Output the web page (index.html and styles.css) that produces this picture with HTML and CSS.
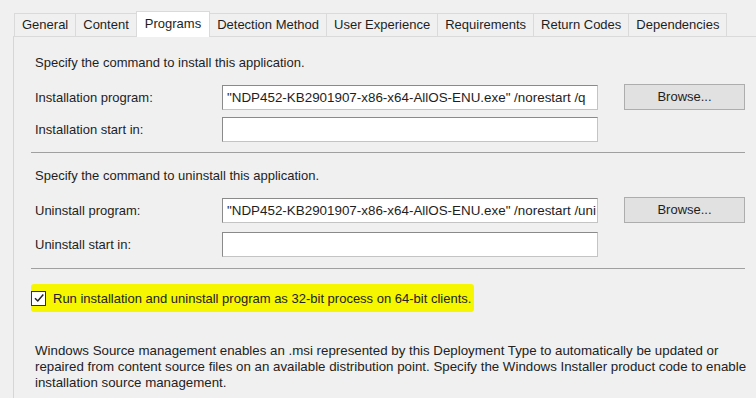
FILE: index.html
```html
<!DOCTYPE html>
<html>
<head>
<meta charset="utf-8">
<link rel="stylesheet" href="styles.css">
</head>
<body>
<div class="tabs">
  <div class="tab">General</div>
  <div class="tab">Content</div>
  <div class="tab active">Programs</div>
  <div class="tab">Detection Method</div>
  <div class="tab">User Experience</div>
  <div class="tab">Requirements</div>
  <div class="tab">Return Codes</div>
  <div class="tab">Dependencies</div>
</div>
<div class="panel">
  <section class="group first">
    <div class="heading">Specify the command to install this application.</div>
    <div class="row">
      <span class="label">Installation program:</span>
      <div class="input">"NDP452-KB2901907-x86-x64-AllOS-ENU.exe" /norestart /q</div>
      <div class="button">Browse...</div>
    </div>
    <div class="row second">
      <span class="label">Installation start in:</span>
      <div class="input"></div>
    </div>
  </section>
  <div class="sep"></div>
  <section class="group">
    <div class="heading">Specify the command to uninstall this application.</div>
    <div class="row">
      <span class="label">Uninstall program:</span>
      <div class="input">"NDP452-KB2901907-x86-x64-AllOS-ENU.exe" /norestart /uni</div>
      <div class="button">Browse...</div>
    </div>
    <div class="row second">
      <span class="label">Uninstall start in:</span>
      <div class="input"></div>
    </div>
  </section>
  <div class="sep"></div>
  <div class="check-row">
    <span class="highlight">
      <span class="checkbox"><svg width="12" height="12" viewBox="0 0 12 12"><path d="M2 6.2 L4.8 9 L10.3 2.5" fill="none" stroke="#222" stroke-width="1.5"/></svg></span>
      <span class="check-label">Run installation and uninstall program as 32-bit process on 64-bit clients.</span>
    </span>
  </div>
  <p class="note">Windows Source management enables an .msi represented by this Deployment Type to automatically be updated or<br>repaired from content source files on an available distribution point. Specify the Windows Installer product code to enable<br>installation source management.</p>
</div>
</body>
</html>
```

FILE: styles.css
```css
html, body {
  margin: 0;
  padding: 0;
  background: #f0f0f0;
  font-family: "Liberation Sans", Arial, sans-serif;
  font-size: 13px;
  color: #1e1e1e;
  overflow: hidden;
  height: 398px;
}

.tabs {
  display: flex;
  padding: 13px 0 0 14px;
  height: 23px;
  position: relative;
  z-index: 1;
}

.tab {
  height: 22px;
  line-height: 22px;
  padding: 0 7px;
  border: 1px solid #dadada;
  border-bottom: none;
  margin-right: -1px;
  background: #f0f0f0;
  white-space: nowrap;
}

.tab.active {
  background: #ffffff;
  margin-top: -2px;
  height: 25px;
  line-height: 23px;
  padding: 0 8px;
  position: relative;
  z-index: 2;
}

.panel {
  margin-left: 13px;
  border-left: 1px solid #d6d6d6;
  border-top: 1px solid #dadada;
  padding: 18px 10px 0 17px;
  height: 343px;
  overflow: hidden;
}

.group {
  padding-left: 4px;
}

.heading {
  line-height: 16px;
  height: 16px;
}

.row {
  display: flex;
  align-items: center;
  margin-top: 13px;
  height: 26px;
}

.row.second {
  margin-top: 6px;
}

.label {
  width: 187px;
  flex: none;
}

.input {
  width: 370px;
  height: 23px;
  line-height: 23px;
  padding: 0 0 0 4px;
  background: #fff;
  border: 1px solid #7a7a7a;
  border-color: #8a8a8a #c4c4c4 #c4c4c4 #8a8a8a;
  white-space: nowrap;
  overflow: hidden;
  flex: none;
  font-size: 13.4px;
}

.button {
  margin-left: 26px;
  width: 119px;
  height: 24px;
  line-height: 24px;
  text-align: center;
  background: #e1e1e1;
  border: 1px solid #adadad;
  flex: none;
}

.sep {
  height: 1px;
  background: #a0a0a0;
  margin: 10px 0 0 0;
  width: 714px;
}

.group:not(.first) {
  margin-top: 15px;
}

.group:not(.first) .row.second {
  margin-top: 8px;
}

.group:not(.first) + .sep {
  margin-top: 11px;
}

.check-row {
  margin-top: 19px;
  height: 20px;
  display: flex;
  align-items: center;
}

.highlight {
  display: inline-flex;
  align-items: center;
  background: #f6f600;
  padding: 4px 3px 4px 0;
  height: 20px;
  border-radius: 3px;
}

.checkbox {
  width: 13px;
  height: 13px;
  border: 1px solid #333;
  background: #fff;
  display: inline-flex;
  align-items: center;
  justify-content: center;
  margin-right: 7px;
}

.check-label {
  color: #222;
}

.note {
  margin: 35px 0 0 4px;
  width: 710px;
  line-height: 16px;
  font-size: 13.3px;
  color: #222;
  white-space: nowrap;
}
```
